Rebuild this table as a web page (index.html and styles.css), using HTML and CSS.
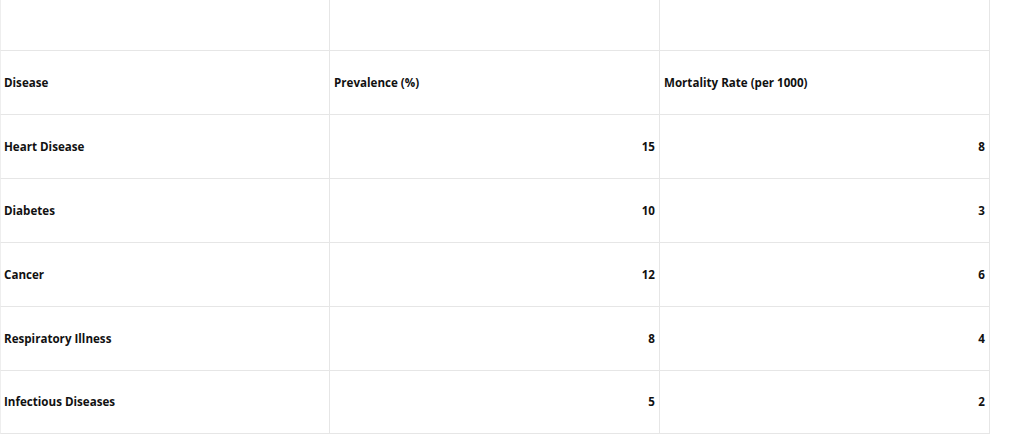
FILE: index.html
```html
<!DOCTYPE html>
<html>
<head>
<meta charset="utf-8">
<link rel="stylesheet" href="styles.css">
</head>
<body>
<div class="sheet">
  <div class="cell top first"></div><div class="cell top"></div><div class="cell top"></div>
  <div class="cell first">Disease</div><div class="cell">Prevalence (%)</div><div class="cell">Mortality Rate (per 1000)</div>
  <div class="cell first">Heart Disease</div><div class="cell num">15</div><div class="cell num">8</div>
  <div class="cell first">Diabetes</div><div class="cell num">10</div><div class="cell num">3</div>
  <div class="cell first">Cancer</div><div class="cell num">12</div><div class="cell num">6</div>
  <div class="cell first">Respiratory Illness</div><div class="cell num">8</div><div class="cell num">4</div>
  <div class="cell first">Infectious Diseases</div><div class="cell num">5</div><div class="cell num">2</div>
</div>
</body>
</html>
```
FILE: styles.css
```css
html, body {
  margin: 0;
  padding: 0;
  background: #ffffff;
}
.sheet {
  display: grid;
  grid-template-columns: 330px 330px 330px;
  grid-template-rows: 51px repeat(5, 64px) 63px;
  width: 990px;
  font-family: "Open Sans", "Liberation Sans", sans-serif;
  font-weight: 700;
  font-size: 11.6px;
  color: #111111;
}
.cell {
  display: flex;
  align-items: center;
  padding: 0 4px 1px;
  border-right: 1px solid #e6e6e6;
  border-bottom: 1px solid #e6e6e6;
  box-sizing: border-box;
}
.cell.first {
  border-left: 1px solid #eeeeee;
  padding-left: 3px;
}
.cell.num {
  justify-content: flex-end;
}
```
